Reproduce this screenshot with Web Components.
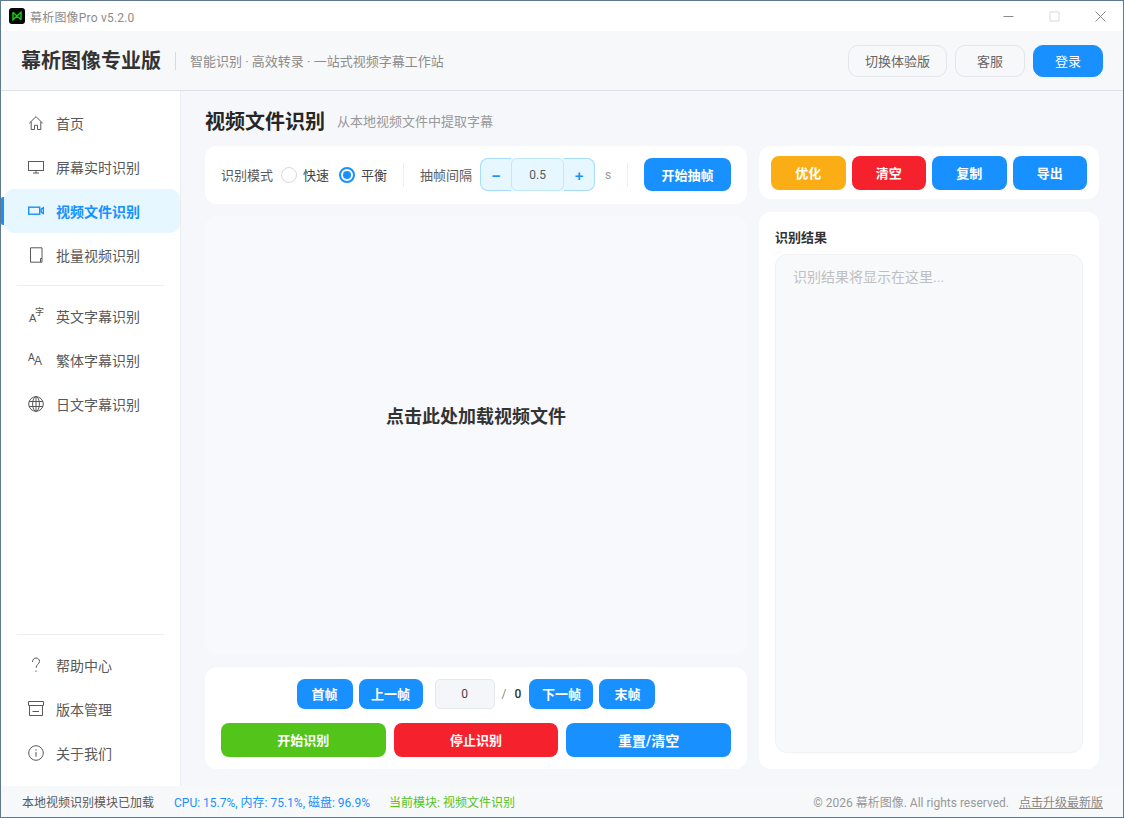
<!DOCTYPE html>
<html lang="zh">
<head>
<meta charset="utf-8">
<title>幕析图像Pro</title>
<style>
html,body{margin:0;padding:0;height:100%;background:#fff;overflow:hidden}
body{font-family:Roboto,"Noto Sans CJK SC",sans-serif;}
</style>
</head>
<body>
<x-app></x-app>
<script>
const FONT = 'Roboto,"Noto Sans CJK SC",sans-serif';
function def(name, css, html) {
  customElements.define(name, class extends HTMLElement {
    constructor() {
      super();
      this.attachShadow({mode: 'open'}).innerHTML = `<style>*,:host{box-sizing:border-box}${css}</style>${html}`;
    }
  });
}
const ICONS = {
  home:'<path d="M1.2 8.4 8 1.6l6.8 6.8M3.2 6.8V14.5h3.3v-4.2h3v4.2h3.3V6.8"/>',
  monitor:'<rect x="0.5" y="2.5" width="15" height="9"/><path d="M8 11.5v2.5M5 14h6"/>',
  video:'<rect x="0.7" y="4.2" width="11" height="7" stroke-width="1.4"/><path d="M13.2 6.2 15.4 4.8V10.6L13.2 9.2z" stroke-width="1.4"/>',
  batch:'<path d="M2.5 0.8H14V15.2H2.5z"/><path d="M12.5 15V11.5H14"/>',
  help:'<path d="M4.5 5C4.5 2.6 6 1 8 1s3.5 1.5 3.5 3.4c0 2.6-3.4 3.2-3.4 6.4"/><path d="M8 13.4v1.4"/>',
  archive:'<path d="M0.5 .5H15.5V4.5H0.5z"/><path d="M1.5 4.5V14.5H14.5V4.5"/><path d="M4.5 10.5H11"/>',
  info:'<circle cx="8" cy="8" r="7.3"/><path d="M8 7v4.8M8 4.2v1.3"/>',
  globe:'<circle cx="8" cy="8" r="7.3"/><ellipse cx="8" cy="8" rx="3.4" ry="7.3"/><path d="M1 5.5H15M1 10.5H15M8 .7V15.3"/>'
};
customElements.define('x-icon', class extends HTMLElement {
  constructor(){
    super();
    this.attachShadow({mode:'open'}).innerHTML = `<style>:host{display:inline-flex;width:16px;height:16px;flex:none}
      svg{width:16px;height:16px;fill:none;stroke:currentColor;stroke-width:1}</style><svg viewBox="0 0 16 16"></svg>`;
  }
  connectedCallback(){
    this.shadowRoot.querySelector('svg').innerHTML = ICONS[this.getAttribute('name')] || '';
  }
});

def('x-titlebar', `:host{display:flex;height:30px;background:#fff;align-items:center;padding-left:8px;flex:none}
 .logo{width:16px;height:16px;background:#050505;border-radius:3px;display:flex;align-items:center;justify-content:center}
 .t{font-size:12px;color:#8c8c8c;margin-left:5px;letter-spacing:.2px}
 .ctl{margin-left:auto;display:flex;height:30px}
 .c{width:46px;display:flex;align-items:center;justify-content:center;color:#8a8a8a}
 svg{display:block}`,
 `<span class="logo"><svg width="10" height="10" viewBox="0 0 10 10" fill="none" stroke="#14c814" stroke-width="1.5"><path d="M1 1.2V8.8L9 1.2V8.8M1 1.2 5 5M9 8.8 5 5"/></svg></span>
  <span class="t">幕析图像Pro v5.2.0</span>
  <span class="ctl">
   <span class="c"><svg width="11" height="11" viewBox="0 0 11 11"><path d="M.5 5.5h10" stroke="#8a8a8a"/></svg></span>
   <span class="c"><svg width="11" height="11" viewBox="0 0 11 11"><path d="M1 1h9v9H1z" fill="none" stroke="#d8d8d8"/></svg></span>
   <span class="c"><svg width="11" height="11" viewBox="0 0 11 11"><path d="M.5.5l10 10M10.5.5l-10 10" stroke="#8a8a8a"/></svg></span>
  </span>`);

def('x-topbtn', `:host{display:flex;height:32px;align-items:center;justify-content:center;border:1px solid #e3e5ea;border-radius:10px;font-size:13px;color:#666;background:#f7f8fa;padding:0 0 1px;width:70px}
 :host([wide]){width:99px}
 :host([primary]){background:#1890ff;border-color:#1890ff;color:#fff}`, `<slot></slot>`);

def('x-header', `:host{display:flex;height:60px;flex:none;align-items:center;background:#f7f8fa;border-bottom:1px solid #dfe1e7;padding:0 20px 0 20px}
 h1{margin:0;font-size:20px;font-weight:700;color:#333;line-height:28px}
 .sep{width:1px;height:18px;background:#d9d9d9;margin:0 14px}
 .s{font-size:13px;color:#8c8c8c}
 .r{margin-left:auto;display:flex;gap:8px}`,
 `<h1>幕析图像专业版</h1><span class="sep"></span><span class="s">智能识别 · 高效转录 · 一站式视频字幕工作站</span>
  <div class="r"><x-topbtn wide>切换体验版</x-topbtn><x-topbtn>客服</x-topbtn><x-topbtn primary>登录</x-topbtn></div>`);

def('x-nav', `:host{display:flex;height:44px;align-items:center;gap:12px;margin-left:3px;padding-left:24px;font-size:14px;color:#595959;border-radius:10px;position:relative;flex:none}
 :host([active]){background:#e6f7ff;color:#1890ff;font-weight:700}
 :host([active])::before{content:"";position:absolute;left:-3px;top:8px;width:3px;height:28px;background:#1890ff;border-radius:2px 0 0 2px}`, `<slot name="i"></slot><span><slot></slot></span>`);

def('x-sidebar', `:host{display:flex;flex-direction:column;width:180px;flex:none;background:#fff;border-right:1px solid #e9ecf1;padding:10px 0 11px;height:100%}
 hr{border:0;height:1px;background:#eeeeee;margin:8px 16px 8px 16px;flex:none}
 .sp{flex:1}
 .w{display:block;width:16px;height:16px;position:relative;color:#555;font-family:"Liberation Sans","Noto Sans CJK SC",sans-serif;line-height:1}
 .w span{position:absolute}`,
 `<x-nav><x-icon slot="i" name="home"></x-icon>首页</x-nav>
  <x-nav><x-icon slot="i" name="monitor"></x-icon>屏幕实时识别</x-nav>
  <x-nav active><x-icon slot="i" name="video"></x-icon>视频文件识别</x-nav>
  <x-nav><x-icon slot="i" name="batch"></x-icon>批量视频识别</x-nav>
  <hr>
  <x-nav><span slot="i" class="w"><span style="left:1px;top:5px;font-size:11px">A</span><span style="left:7px;top:0;font-size:9px">字</span></span>英文字幕识别</x-nav>
  <x-nav><span slot="i" class="w"><span style="left:0;top:1px;font-size:10px">A</span><span style="left:6px;top:3px;font-size:12px">A</span></span>繁体字幕识别</x-nav>
  <x-nav><x-icon slot="i" name="globe"></x-icon>日文字幕识别</x-nav>
  <div class="sp"></div>
  <hr>
  <x-nav><x-icon slot="i" name="help"></x-icon>帮助中心</x-nav>
  <x-nav><x-icon slot="i" name="archive"></x-icon>版本管理</x-nav>
  <x-nav><x-icon slot="i" name="info"></x-icon>关于我们</x-nav>`);

def('x-btn', `:host{display:flex;align-items:center;justify-content:center;height:33px;border-radius:8px;background:#1890ff;color:#fff;font-size:13px;font-weight:700;flex:none;padding-bottom:1px;white-space:nowrap}
 :host([kind=warn]){background:#faad14}
 :host([kind=danger]){background:#f5222d}
 :host([kind=ok]){background:#52c41a}
 :host([big]){height:34px;flex:1 1 0;padding-bottom:2px}
 :host([small]){height:30px}`, `<slot></slot>`);

def('x-radio', `:host{display:inline-flex;align-items:center;gap:6px;font-size:13px;color:#444;flex:none;white-space:nowrap}
 i{display:block;width:16px;height:16px;border-radius:50%;border:1px solid #d9d9d9;background:#fff;flex:none}
 :host([on]) i{border:2px solid #1890ff;padding:2px}
 :host([on]) i::after{content:"";display:block;width:8px;height:8px;border-radius:50%;background:#1890ff}`, `<i></i><span><slot></slot></span>`);

def('x-spinner', `:host{display:flex;height:33px;width:115px;font-size:12px;color:#595959;flex:none;background:#e6f7ff;border-radius:8px}
 span{display:flex;align-items:center;justify-content:center;background:#e6f7ff;border:1px solid #a6dcff}
 .m,.p{width:31px;color:#1890ff;font-weight:700;font-size:15px;font-family:"Liberation Sans",sans-serif;padding-top:2px}
 .m{border-radius:8px 0 0 8px;border-right:0}
 .p{border-radius:0 8px 8px 0;border-left:0}
 .v{flex:1;border-color:#bfe8ff;border-radius:6px}`,
 `<span class="m">−</span><span class="v">0.5</span><span class="p">+</span>`);

def('x-modebar', `:host{display:flex;height:58px;flex:none;align-items:center;background:#fff;border-radius:12px;padding:0 16px 1px;font-size:13px;color:#595959;white-space:nowrap}
 .d{width:1px;height:24px;background:#eceef1;flex:none}
 .l{flex:none}
 x-btn{width:87px}`,
 `<span class="l">识别模式</span><x-radio style="margin-left:8px">快速</x-radio><x-radio on style="margin-left:10px">平衡</x-radio>
  <span class="d" style="margin:0 16px 0 16px"></span><span class="l">抽帧间隔</span><x-spinner style="margin-left:8px"></x-spinner>
  <span style="margin-left:10px;color:#999;font-size:12px;width:9px;flex:none">s</span><span class="d" style="margin:0 16px 0 13px"></span><x-btn>开始抽帧</x-btn>`);

def('x-stage', `:host{display:flex;flex:1;min-height:0;align-items:center;justify-content:center;background:#f8f9fc;border-radius:12px;font-size:18px;font-weight:700;color:#333;padding-bottom:42px}`, `<slot></slot>`);

def('x-controls', `:host{display:flex;flex-direction:column;gap:14px;flex:none;height:102px;background:#fff;border-radius:12px;padding:12px 16px}
 .a{display:flex;justify-content:center;align-items:center;height:30px}
 .b{display:flex;gap:8px}
 .in{width:60px;height:30px;background:#f5f6f9;border:1px solid #e5e7ec;border-radius:5px;display:flex;align-items:center;justify-content:center;font-size:12px;color:#444;margin:0 7px 0 12px}
 .s{color:#888;font-size:12px;width:6px}
 .n{color:#333;font-size:12px;font-weight:500;margin:0 8px 0 7px}`,
 `<div class="a"><x-btn small style="margin-right:6px;width:56px">首帧</x-btn><x-btn small style="width:64px">上一帧</x-btn>
   <span class="in">0</span><span class="s">/</span><span class="n">0</span>
   <x-btn small style="width:64px">下一帧</x-btn><x-btn small style="margin-left:6px;width:56px">末帧</x-btn></div>
  <div class="b"><x-btn big kind="ok">开始识别</x-btn><x-btn big kind="danger">停止识别</x-btn><x-btn big style="font-size:14px;padding-bottom:0">重置/清空</x-btn></div>`);

def('x-actions', `:host{display:flex;gap:6px;height:53px;flex:none;align-items:center;background:#fff;border-radius:12px;padding:0 12px}
 x-btn{flex:1 1 0;height:34px}`,
 `<x-btn kind="warn">优化</x-btn><x-btn kind="danger">清空</x-btn><x-btn>复制</x-btn><x-btn>导出</x-btn>`);

def('x-result', `:host{display:flex;flex-direction:column;flex:1;min-height:0;background:#fff;border-radius:12px;padding:16px;gap:6px}
 .h{font-size:13px;font-weight:700;color:#333;line-height:20px;flex:none}
 .t{flex:1;background:#f8f9fb;border:1px solid #eff1f4;border-radius:12px;padding:12px 17px;font-size:14px;line-height:20px;color:#bfbfbf}`,
 `<div class="h">识别结果</div><div class="t">识别结果将显示在这里...</div>`);

def('x-main', `:host{display:flex;flex-direction:column;flex:1;min-width:0;background:#f5f7fb;padding:18px 24px 17px}
 .top{display:flex;align-items:center;height:26px;margin-bottom:11px;flex:none}
 h2{margin:0;font-size:20px;font-weight:700;color:#262626;line-height:26px}
 .sub{font-size:13px;color:#999;margin-left:12px;margin-bottom:3px}
 .grid{flex:1;min-height:0;display:grid;grid-template-columns:1fr 340px;gap:12px}
 .col{display:flex;flex-direction:column;min-height:0;min-width:0;gap:12px}
 .col.r{gap:13px}`,
 `<div class="top"><h2>视频文件识别</h2><span class="sub">从本地视频文件中提取字幕</span></div>
  <div class="grid">
   <div class="col"><x-modebar></x-modebar><x-stage>点击此处加载视频文件</x-stage><x-controls></x-controls></div>
   <div class="col r"><x-actions></x-actions><x-result></x-result></div>
  </div>`);

def('x-status', `:host{display:flex;height:31px;flex:none;align-items:center;background:#f7f8fa;padding:0 20px 0 21px;font-size:12px;gap:19px;color:#595959}
 .b{color:#1890ff;margin-left:1px}.g{color:#52c41a}
 .r{margin-left:auto;color:#999;display:flex;gap:10px}
 u{color:#888}`,
 `<span>本地视频识别模块已加载</span><span class="b">CPU: 15.7%, 内存: 75.1%, 磁盘: 96.9%</span><span class="g">当前模块: 视频文件识别</span>
  <span class="r"><span>© 2026 幕析图像. All rights reserved.</span><u>点击升级最新版</u></span>`);

def('x-app', `:host{display:flex;flex-direction:column;width:1124px;height:818px;border:1px solid #5d7a90;overflow:hidden;font-family:${FONT};background:#fff}
 .mid{flex:1;min-height:0;display:flex}`,
 `<x-titlebar></x-titlebar><x-header></x-header>
  <div class="mid"><x-sidebar></x-sidebar><x-main></x-main></div>
  <x-status></x-status>`);
</script>
</body>
</html>
